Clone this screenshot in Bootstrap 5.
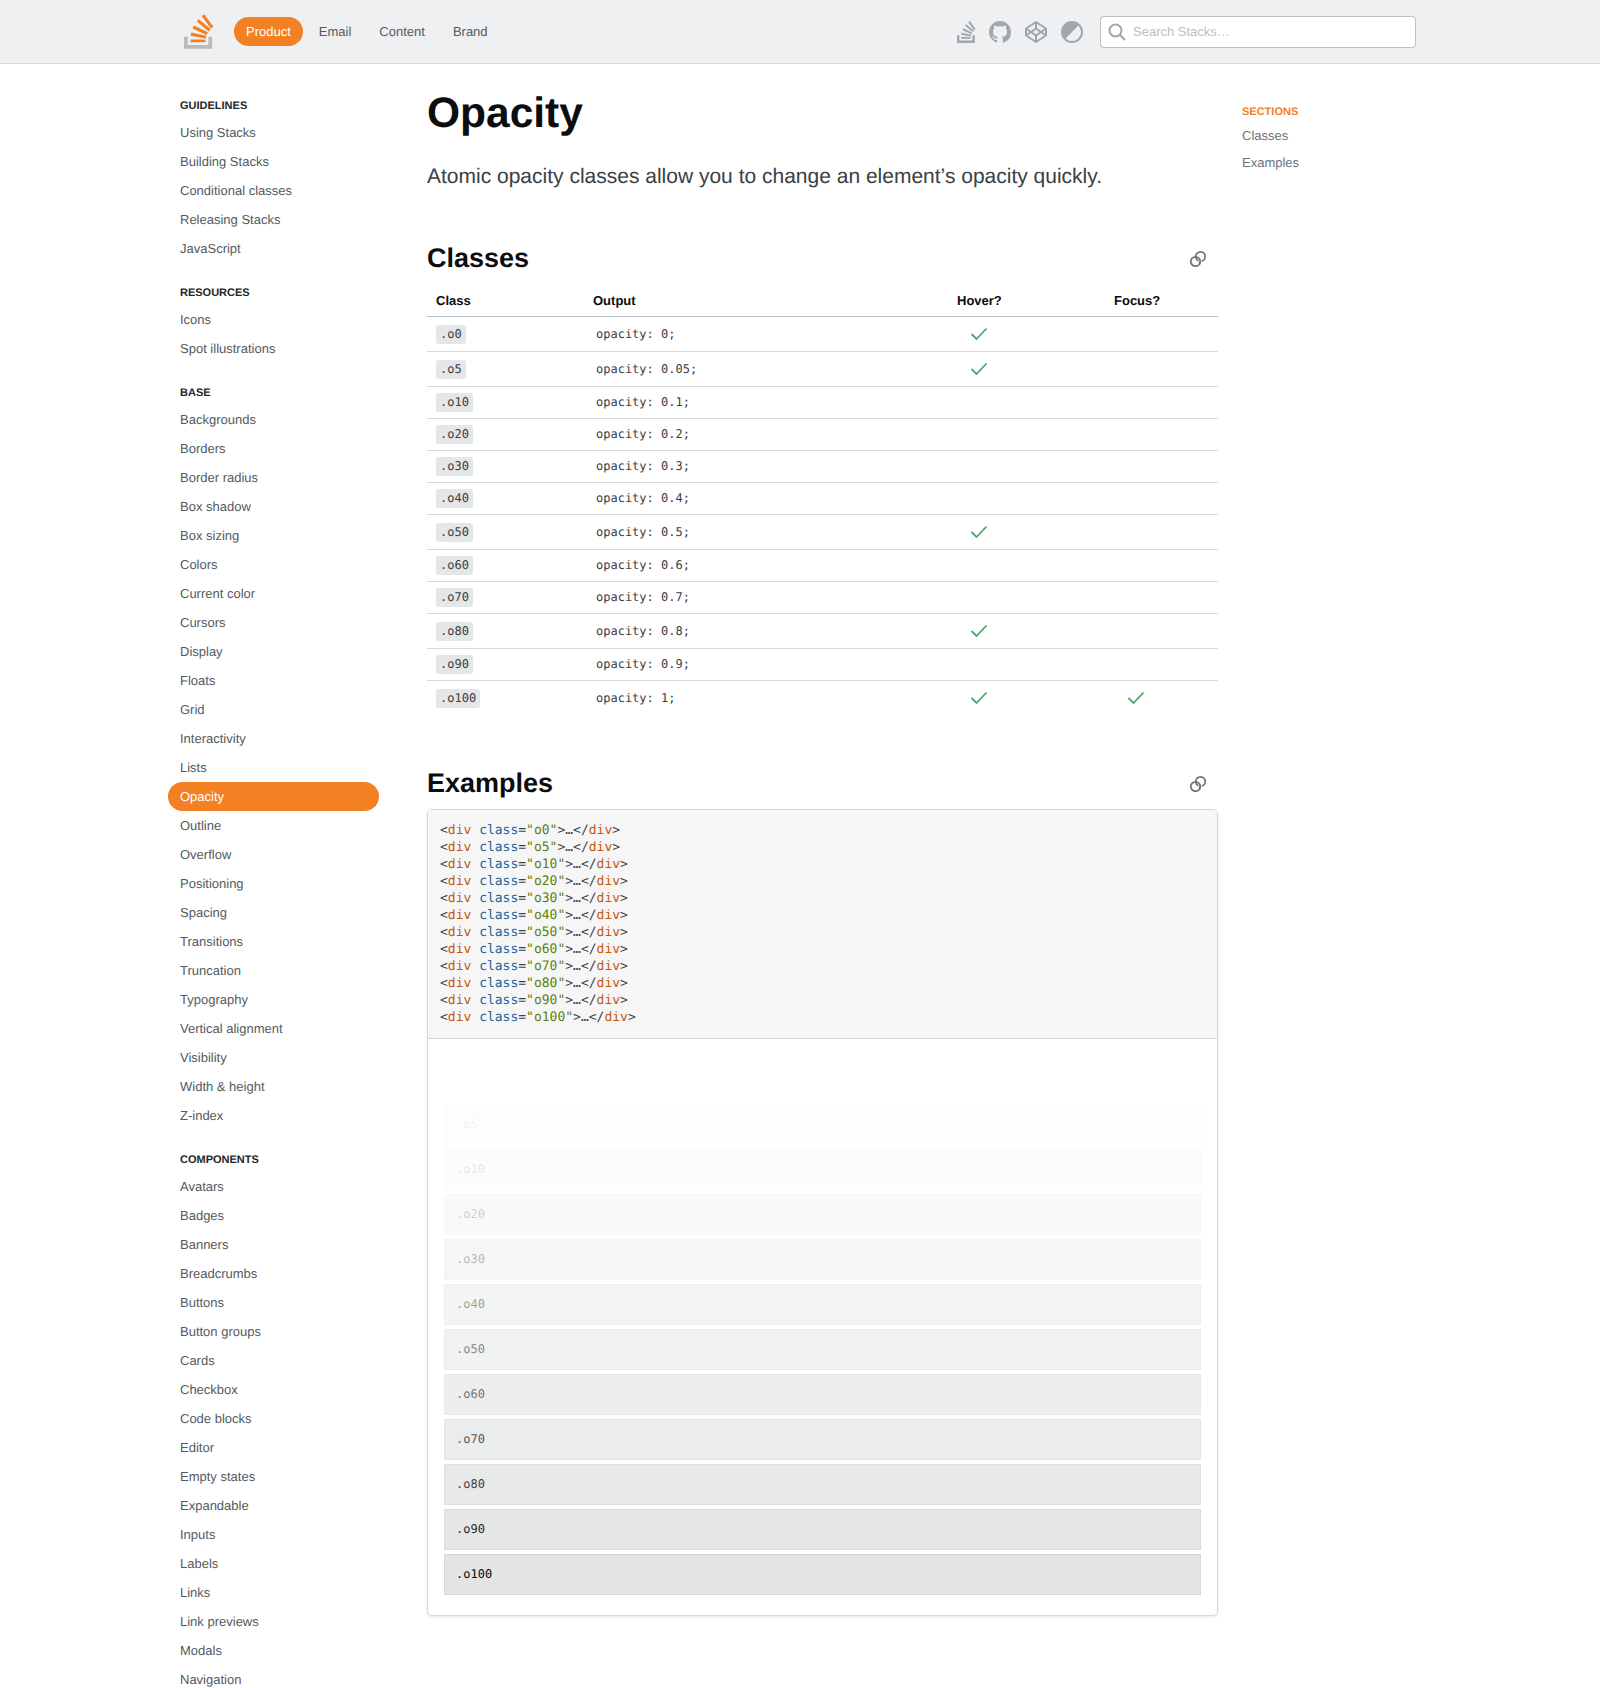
<!DOCTYPE html>
<html lang="en">
<head>
    <meta charset="UTF-8">
    <meta name="viewport" content="width=device-width, initial-scale=1.0">
    <title>Opacity - Stacks</title>
    <link href="https://cdn.jsdelivr.net/npm/bootstrap@5.3.0/dist/css/bootstrap.min.css" rel="stylesheet">
    <script src="https://cdn.jsdelivr.net/npm/bootstrap@5.3.0/dist/js/bootstrap.bundle.min.js"></script>

    <style>
        html, body { height: 1688px; overflow: hidden; }
        body { font-family: "Liberation Sans", Arial, sans-serif; font-size: 13px; line-height: 17px; color: #0c0d0e; background: #fff; text-rendering: geometricPrecision; }
        .page-wrap { width: 1264px; margin: 0 auto; }
        .mono { font-family: "DejaVu Sans Mono", "Liberation Mono", monospace; }

        .top-bar { height: 64px; background: #eff0f1; border-bottom: 1px solid #d6d9dc; }
        .top-inner { height: 63px; padding: 0 16px; }
        .top-bar .nav { gap: 4px; margin-left: 20px; }
        .top-bar .nav-link { padding: 6px 12px; font-size: 13px; line-height: 17px; color: #535a60; border-radius: 1000px; }
        .top-bar .nav-link.active { background: #f48024; color: #fff; }
        .top-icons { gap: 13px; margin-right: 17px; }
        .top-icons svg { display: block; }
        .search-box { width: 316px; }
        .search-box .form-control { height: 32px; padding: 0 8px 0 32px; font-size: 13px; line-height: 17px; border: 1px solid #bbc0c4; border-radius: 4px; }
        .search-box .form-control::placeholder { color: #bbc0c4; opacity: 1; }
        .search-glass { position: absolute; left: 8px; top: 7px; }

        .side-col { width: 211px; flex: none; padding-top: 34px; margin-right: 48px; }
        .side-head { font-size: 11px; line-height: 17px; font-weight: 700; text-transform: uppercase; color: #242729; padding-left: 12px; margin: 22px 0 3px; }
        .side-head:first-child { margin-top: 0; }
        .side-col .nav-link { padding: 6px 12px; font-size: 13px; line-height: 17px; color: #535a60; border-radius: 1000px; }
        .side-col .nav-link.active { background: #f48024; color: #fff; }

        .main-col { width: 791px; flex: none; padding-top: 24px; margin-right: 24px; }
        .page-title { font-size: 42.5px; line-height: 52px; font-weight: 700; margin: 0 0 23px; }
        .page-lead { font-size: 21px; line-height: 28px; color: #3b4045; margin: 0 0 50px; }
        .sec-head { height: 34px; margin-bottom: 9px; }
        .sec-head h2 { font-size: 27px; line-height: 34px; font-weight: 700; margin: 0; }
        .sec-head svg { margin-right: 11px; margin-top: 9px; }

        .opacity-table { width: 100%; border-collapse: collapse; table-layout: fixed; margin: 0 0 51px; }
        .opacity-table th { font-size: 13px; line-height: 17px; font-weight: 700; padding: 8px 9px 7px; border-bottom: 1px solid #bbc0c4; }
        .opacity-table td { padding: 6px 9px; border-bottom: 1px solid #d6d9dc; vertical-align: middle; color: #3b4045; }
        .opacity-table tr:last-child td { border-bottom: 0; }
        .class-chip { display: inline-block; font-size: 12px; line-height: 19px; padding: 0 4px; background: #e4e6e8; border-radius: 3px; color: #3b4045; vertical-align: middle; }
        .out-text { font-size: 12px; line-height: 17px; padding-left: 3px; display: block; }
        .tick { display: block; margin-left: 13px; }

        .example-box { border: 1px solid #d6d9dc; border-radius: 5px; box-shadow: 0 1px 3px rgba(12,13,14,.1); overflow: hidden; }
        .example-code { margin: 0; padding: 12px; font-size: 13px; line-height: 17px; background: #f6f6f6; border-bottom: 1px solid #d6d9dc; color: #3c4146; overflow: hidden; }
        .tok-tag { color: #c05a0c; }
        .tok-attr { color: #1d659f; }
        .tok-str { color: #5b8110; }
        .example-rows { padding: 20px 16px 20px; }
        .swatch-row { height: 41px; padding: 11px; margin-bottom: 4px; font-size: 12px; line-height: 17px; background: #e3e4e6; border: 1px solid #d6d9dc; color: #0c0d0e; }
        .swatch-row:last-child { margin-bottom: 0; }

        .right-col { flex: 1; padding-top: 40px; }
        .right-head { font-size: 11px; line-height: 17px; font-weight: 700; text-transform: uppercase; color: #f48024; margin-bottom: 1px; }
        .right-col a { display: block; padding: 4px 0; font-size: 13px; line-height: 19px; color: #6a737c; text-decoration: none; }
    </style>
</head>
<body>
    <header class="top-bar">
        <div class="page-wrap top-inner d-flex align-items-center">
            <svg width="30" height="37" viewBox="0 0 32 37"><path d="M26 33v-9h4v13H0V24h4v9h22Z" fill="#bcbbbb"/><path d="m21.5 0-2.7 2 9.9 13.3 2.7-2L21.5 0ZM26.3 18.4 13.6 7.8l2.1-2.5 12.7 10.6-2.1 2.5ZM9.1 15.2l15 7 1.4-3-15-7-1.4 3Zm14 10.79.68-2.95-16.1-3.35L7 23l16.1 2.99ZM23 30H7v-3h16v3Z" fill="#f48024"/></svg>
            <nav class="nav">
                <a class="nav-link active" href="#">Product</a>
                <a class="nav-link" href="#">Email</a>
                <a class="nav-link" href="#">Content</a>
                <a class="nav-link" href="#">Brand</a>
            </nav>
            <div class="d-flex align-items-center top-icons ms-auto">
                <svg width="19" height="22" viewBox="0 0 32 37" fill="#9fa6ad"><path d="M26 33v-9h4v13H0V24h4v9h22Z"/><path d="m21.5 0-2.7 2 9.9 13.3 2.7-2L21.5 0ZM26.3 18.4 13.6 7.8l2.1-2.5 12.7 10.6-2.1 2.5ZM9.1 15.2l15 7 1.4-3-15-7-1.4 3Zm14 10.79.68-2.95-16.1-3.35L7 23l16.1 2.99ZM23 30H7v-3h16v3Z"/></svg>
                <svg width="22" height="22" viewBox="0 0 16 16" fill="#9fa6ad"><path d="M8 0C3.58 0 0 3.58 0 8c0 3.54 2.29 6.53 5.47 7.59.4.07.55-.17.55-.38 0-.19-.01-.82-.01-1.49-2.01.37-2.53-.49-2.69-.94-.09-.23-.48-.94-.82-1.13-.28-.15-.68-.52-.01-.53.63-.01 1.08.58 1.23.82.72 1.21 1.87.87 2.33.66.07-.52.28-.87.51-1.07-1.78-.2-3.64-.89-3.64-3.95 0-.87.31-1.59.82-2.15-.08-.2-.36-1.02.08-2.12 0 0 .67-.21 2.2.82.64-.18 1.32-.27 2-.27.68 0 1.36.09 2 .27 1.53-1.04 2.2-.82 2.2-.82.44 1.1.16 1.92.08 2.12.51.56.82 1.27.82 2.15 0 3.07-1.87 3.75-3.65 3.95.29.25.54.73.54 1.48 0 1.07-.01 1.93-.01 2.2 0 .21.15.46.55.38A8.013 8.013 0 0016 8c0-4.42-3.58-8-8-8z"/></svg>
                <svg width="24" height="24" viewBox="0 0 24 24" fill="none" stroke="#9fa6ad" stroke-width="2" stroke-linejoin="round"><path d="M12 2 22 8.5v7L12 22 2 15.5v-7L12 2Z"/><path d="M12 22v-6.5M22 8.5l-10 7-10-7M2 15.5l10-7 10 7M12 2v6.5"/></svg>
                <svg width="22" height="22" viewBox="0 0 22 22"><circle cx="11" cy="11" r="11" fill="#9fa6ad"/><path d="M17.4 4.6A9 9 0 0 1 4.6 17.4L17.4 4.6Z" fill="#eff0f1"/></svg>
            </div>
            <div class="search-box position-relative">
                <input class="form-control" type="text" placeholder="Search Stacks…">
                <svg class="search-glass" width="18" height="18" viewBox="0 0 18 18" fill="none" stroke="#9fa6ad" stroke-width="2"><circle cx="7.5" cy="7.5" r="6"/><path d="m12 12 5 5"/></svg>
            </div>
        </div>
    </header>

    <div class="page-wrap d-flex align-items-start">
        <aside class="side-col" id="sideCol"></aside>

        <main class="main-col">
            <h1 class="page-title">Opacity</h1>
            <p class="page-lead">Atomic opacity classes allow you to change an element’s opacity quickly.</p>

            <div class="sec-head d-flex justify-content-between">
                <h2>Classes</h2>
                <svg width="18" height="18" viewBox="0 0 18 18" fill="none" stroke="#6a737c" stroke-width="1.7"><circle cx="6.5" cy="11.5" r="4.7"/><circle cx="11.5" cy="6.5" r="4.7"/><path d="M10.35 8.8A4.7 4.7 0 0 1 10.76 13.49" stroke="#fff" stroke-width="3.4"/><path d="M10.2 8.6A4.7 4.7 0 0 1 10.2 14.4"/></svg>
            </div>
            <table class="opacity-table" id="classTable">
                <colgroup><col style="width:157px"><col style="width:364px"><col style="width:157px"><col style="width:113px"></colgroup>
                <thead><tr><th>Class</th><th>Output</th><th>Hover?</th><th>Focus?</th></tr></thead>
                <tbody></tbody>
            </table>

            <div class="sec-head d-flex justify-content-between">
                <h2>Examples</h2>
                <svg width="18" height="18" viewBox="0 0 18 18" fill="none" stroke="#6a737c" stroke-width="1.7"><circle cx="6.5" cy="11.5" r="4.7"/><circle cx="11.5" cy="6.5" r="4.7"/><path d="M10.35 8.8A4.7 4.7 0 0 1 10.76 13.49" stroke="#fff" stroke-width="3.4"/><path d="M10.2 8.6A4.7 4.7 0 0 1 10.2 14.4"/></svg>
            </div>
            <div class="example-box">
                <pre class="example-code mono" id="exampleCode"></pre>
                <div class="example-rows mono" id="exampleRows"></div>
            </div>
        </main>

        <aside class="right-col">
            <div class="right-head">Sections</div>
            <a href="#">Classes</a>
            <a href="#">Examples</a>
        </aside>
    </div>

    <script>
        const sideNav = [
            ["Guidelines", ["Using Stacks", "Building Stacks", "Conditional classes", "Releasing Stacks", "JavaScript"]],
            ["Resources", ["Icons", "Spot illustrations"]],
            ["Base", ["Backgrounds", "Borders", "Border radius", "Box shadow", "Box sizing", "Colors", "Current color", "Cursors", "Display", "Floats", "Grid", "Interactivity", "Lists", "Opacity", "Outline", "Overflow", "Positioning", "Spacing", "Transitions", "Truncation", "Typography", "Vertical alignment", "Visibility", "Width & height", "Z-index"]],
            ["Components", ["Avatars", "Badges", "Banners", "Breadcrumbs", "Buttons", "Button groups", "Cards", "Checkbox", "Code blocks", "Editor", "Empty states", "Expandable", "Inputs", "Labels", "Links", "Link previews", "Modals", "Navigation"]]
        ];

        const sideCol = document.getElementById("sideCol");
        sideNav.forEach(([title, items]) => {
            const head = document.createElement("div");
            head.className = "side-head";
            head.textContent = title;
            sideCol.appendChild(head);
            const nav = document.createElement("nav");
            nav.className = "nav flex-column";
            items.forEach((item) => {
                const link = document.createElement("a");
                link.className = item === "Opacity" ? "nav-link active" : "nav-link";
                link.href = "#";
                link.textContent = item;
                nav.appendChild(link);
            });
            sideCol.appendChild(nav);
        });

        // value, hover, focus
        const opacityData = [
            [0, true, false], [5, true, false], [10, false, false], [20, false, false], [30, false, false], [40, false, false],
            [50, true, false], [60, false, false], [70, false, false], [80, true, false], [90, false, false], [100, true, true]
        ];

        const tick = '<svg class="tick" width="18" height="22" viewBox="0 0 18 22" fill="none" stroke="#48a868" stroke-width="1.8"><path d="m1.5 11 5 5 10-10.5"/></svg>';
        const tableBody = document.querySelector("#classTable tbody");
        const exampleCode = document.getElementById("exampleCode");
        const exampleRows = document.getElementById("exampleRows");
        let codeHtml = [];

        opacityData.forEach(([value, hover, focus]) => {
            const row = document.createElement("tr");
            row.innerHTML = `<td><code class="class-chip mono">.o${value}</code></td>
                <td><span class="out-text mono">opacity: ${value === 100 ? 1 : value === 5 ? "0.05" : value === 0 ? 0 : value / 100};</span></td>
                <td>${hover ? tick : ""}</td><td>${focus ? tick : ""}</td>`;
            tableBody.appendChild(row);

            codeHtml.push(`&lt;<span class="tok-tag">div</span> <span class="tok-attr">class</span>=<span class="tok-str">"o${value}"</span>&gt;…&lt;/<span class="tok-tag">div</span>&gt;`);

            const swatch = document.createElement("div");
            swatch.className = "swatch-row";
            swatch.style.opacity = value / 100;
            swatch.textContent = `.o${value}`;
            exampleRows.appendChild(swatch);
        });
        exampleCode.innerHTML = codeHtml.join("\n");
    </script>
</body>
</html>
